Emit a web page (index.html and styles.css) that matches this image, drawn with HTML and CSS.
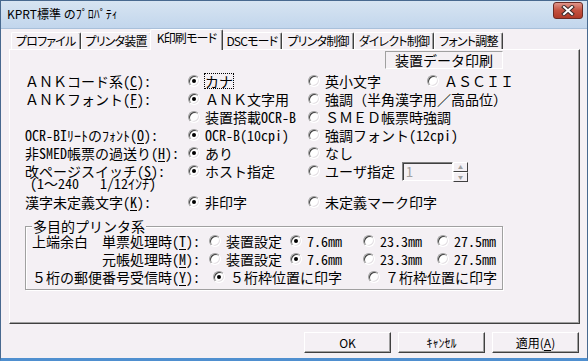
FILE: index.html
```html
<!DOCTYPE html>
<html lang="ja">
<head>
    <meta charset="UTF-8">
    <title>KPRT標準 のﾌﾟﾛﾊﾟﾃｨ</title>
    <link rel="stylesheet" href="styles.css">
</head>
<body>
    <div class="window">
        <div class="titlebar">
            <span class="title">KPRT標準 のﾌﾟﾛﾊﾟﾃｨ</span>
            <span class="close-btn">
                <svg width="14" height="11" viewBox="0 0 14 11">
                    <path d="M3 2 L11 9 M11 2 L3 9" stroke="#3a2a2a" stroke-width="4" stroke-linecap="square"/>
                    <path d="M3 2 L11 9 M11 2 L3 9" stroke="#ffffff" stroke-width="2" stroke-linecap="square"/>
                </svg>
            </span>
        </div>

        <div class="client">
            <div class="tabs">
                <div class="tab">プロファイル</div>
                <div class="tab">プリンタ装置</div>
                <div class="tab active">K印刷モード</div>
                <div class="tab">DSCモード</div>
                <div class="tab">プリンタ制御</div>
                <div class="tab">ダイレクト制御</div>
                <div class="tab">フォント調整</div>
            </div>

            <div class="panel">
                <div class="panel-head">
                    <span class="print-label">装置データ印刷</span>
                </div>

                <div class="form">
                    <div class="row">
                        <span class="label">ＡＮＫコード系(<u>C</u>):</span>
                        <span class="opt col1 checked"><span class="radio"></span><span class="focus">カナ</span></span>
                        <span class="opt col2"><span class="radio"></span>英小文字</span>
                        <span class="opt"><span class="radio"></span>ＡＳＣＩＩ</span>
                    </div>
                    <div class="row">
                        <span class="label">ＡＮＫフォント(<u>F</u>):</span>
                        <span class="opt col1 checked"><span class="radio"></span>ＡＮＫ文字用</span>
                        <span class="opt"><span class="radio"></span>強調（半角漢字用／高品位）</span>
                    </div>
                    <div class="row">
                        <span class="label"></span>
                        <span class="opt col1"><span class="radio"></span>装置搭載OCR-B</span>
                        <span class="opt"><span class="radio"></span>ＳＭＥＤ帳票時強調</span>
                    </div>
                    <div class="row">
                        <span class="label">OCR-BIﾘｰﾄのﾌｫﾝﾄ(<u>O</u>):</span>
                        <span class="opt col1 checked"><span class="radio"></span>OCR-B(10cpi)</span>
                        <span class="opt"><span class="radio"></span>強調フォント(12cpi)</span>
                    </div>
                    <div class="row">
                        <span class="label">非SMED帳票の過送り(<u>H</u>):</span>
                        <span class="opt col1 checked"><span class="radio"></span>あり</span>
                        <span class="opt"><span class="radio"></span>なし</span>
                    </div>
                    <div class="row">
                        <span class="label">改ページスイッチ(<u>S</u>):</span>
                        <span class="opt col1 checked"><span class="radio"></span>ホスト指定</span>
                        <span class="opt"><span class="radio"></span>ユーザ指定</span>
                        <span class="spin">
                            <span class="spin-input">1</span>
                            <span class="spin-btns">
                                <span class="spin-btn">▲</span>
                                <span class="spin-btn">▼</span>
                            </span>
                        </span>
                    </div>
                    <div class="note">(1～240   1/12ｲﾝﾁ)</div>
                    <div class="row">
                        <span class="label">漢字未定義文字(<u>K</u>):</span>
                        <span class="opt col1 checked"><span class="radio"></span>非印字</span>
                        <span class="opt"><span class="radio"></span>未定義マーク印字</span>
                    </div>

                    <fieldset class="group">
                        <legend>多目的プリンタ系</legend>
                        <div class="row">
                            <span class="glabel"><span class="ghead">上端余白</span>単票処理時(<u>T</u>):</span>
                            <span class="opt g1"><span class="radio"></span>装置設定</span>
                            <span class="opt g2 checked"><span class="radio"></span>7.6mm</span>
                            <span class="opt g3"><span class="radio"></span>23.3mm</span>
                            <span class="opt"><span class="radio"></span>27.5mm</span>
                        </div>
                        <div class="row">
                            <span class="glabel"><span class="ghead"></span>元帳処理時(<u>M</u>):</span>
                            <span class="opt g1"><span class="radio"></span>装置設定</span>
                            <span class="opt g2 checked"><span class="radio"></span>7.6mm</span>
                            <span class="opt g3"><span class="radio"></span>23.3mm</span>
                            <span class="opt"><span class="radio"></span>27.5mm</span>
                        </div>
                        <div class="row">
                            <span class="glabel wide">５桁の郵便番号受信時(<u>Y</u>):</span>
                            <span class="opt g5 checked"><span class="radio"></span>５桁枠位置に印字</span>
                            <span class="opt"><span class="radio"></span>７桁枠位置に印字</span>
                        </div>
                    </fieldset>
                </div>
            </div>

            <div class="buttons">
                <span class="btn">OK</span>
                <span class="btn">ｷｬﾝｾﾙ</span>
                <span class="btn">適用(<u>A</u>)</span>
            </div>
        </div>
    </div>
</body>
</html>
```

FILE: styles.css
```css
body {
    margin: 0;
    font-family: "Noto Sans Mono CJK JP", "Noto Sans CJK JP", sans-serif;
    font-size: 14px;
    color: #000;
    background: #ffffff;
}
u {
    text-decoration: underline;
    text-underline-offset: 2px;
}
.window {
    width: 588px;
    height: 361px;
    box-sizing: border-box;
    display: flex;
    flex-direction: column;
    background: #f4f0f4;
    border: 1px solid #48698f;
    border-bottom-width: 3px;
    border-bottom-color: #4f8fcf;
}
.titlebar {
    height: 27px;
    flex: none;
    display: flex;
    align-items: center;
    justify-content: space-between;
    padding: 0 4px 0 6px;
    background: linear-gradient(#d7e4f2, #c2d6ec);
    border-bottom: 1px solid #a9c0da;
    font-family: "Noto Sans CJK JP", sans-serif;
    font-size: 12px;
}
.title {
    color: #000;
    margin-top: -2px;
}
.close-btn {
    width: 28px;
    height: 15px;
    margin-top: -9px;
    display: flex;
    align-items: center;
    justify-content: center;
    border: 1px solid #6b2b24;
    border-radius: 3px;
    background: linear-gradient(#e0958a, #c4513f 50%, #b03a28);
}
.client {
    flex: 1;
    display: flex;
    flex-direction: column;
    padding: 1px 7px 0 8px;
}
.tabs {
    display: flex;
    align-items: flex-end;
    height: 19px;
    padding-left: 2px;
    font-family: "Noto Sans CJK JP", sans-serif;
    font-size: 12px;
    letter-spacing: -0.8px;
    font-feature-settings: "palt";
}
.tab {
    height: 16px;
    line-height: 16px;
    padding: 0 4px;
    border: 1px solid;
    border-color: #ffffff #404040 transparent #ffffff;
    border-bottom: none;
    border-radius: 2px 2px 0 0;
    box-shadow: inset -1px 0 #a0a0a0;
    white-space: nowrap;
}
.tab.active {
    height: 19px;
    margin: 0 -2px -1px;
    padding: 0 6px 1px;
    background: #f4f0f4;
    position: relative;
    z-index: 1;
}
.panel {
    height: 275px;
    box-sizing: border-box;
    border: 1px solid;
    border-color: #ffffff #404040 #404040 #ffffff;
    box-shadow: inset -1px -1px #a0a0a0;
}
.panel-head {
    height: 18px;
    padding-left: 375px;
}
.print-label {
    display: inline-block;
    width: 116px;
    height: 16px;
    line-height: 16px;
    text-align: center;
    border: 1px solid;
    border-color: #a0a0a0 #ffffff #ffffff #a0a0a0;
}
.form {
    padding: 4px 0 0 15px;
}
.row {
    display: flex;
    align-items: center;
    height: 18px;
    line-height: 14px;
    white-space: nowrap;
}
.label {
    width: 163px;
    flex: none;
}
.opt {
    display: flex;
    align-items: center;
    flex: none;
}
.col1 {
    width: 120px;
}
.col2 {
    width: 119px;
}
.radio {
    width: 12px;
    height: 12px;
    box-sizing: border-box;
    margin-right: 5px;
    border-radius: 50%;
    border: 1px solid;
    border-color: #a0a0a0 #ffffff #ffffff #a0a0a0;
    background: #ffffff;
    box-shadow: inset 1px 1px #404040, inset -1px -1px #e4e0e4;
    position: relative;
    flex: none;
}
.checked > .radio::after {
    content: "";
    position: absolute;
    left: 3px;
    top: 3px;
    width: 4px;
    height: 4px;
    border-radius: 50%;
    background: #000;
}
.focus {
    outline: 1px dotted #000;
    outline-offset: 0;
}
.spin {
    display: flex;
    margin-left: 7px;
    height: 19px;
}
.spin-input {
    width: 51px;
    box-sizing: border-box;
    border: 1px solid;
    border-color: #808080 #ffffff #ffffff #808080;
    box-shadow: inset 1px 1px #404040;
    color: #a0a0a0;
    line-height: 17px;
    padding-left: 3px;
}
.spin-btns {
    width: 15px;
    display: flex;
    flex-direction: column;
}
.spin-btn {
    flex: 1;
    font-size: 5px;
    line-height: 8px;
    color: #a0a0a0;
    text-align: center;
    border: 1px solid;
    border-color: #ffffff #404040 #404040 #ffffff;
}
.note {
    height: 13px;
    line-height: 13px;
    margin: -3px 0 3px;
    padding-left: 5px;
    white-space: pre;
}
.group {
    width: 478px;
    box-sizing: border-box;
    margin: 9px 0 0 0;
    padding: 0 0 3px 6px;
    border: 1px solid #a0a0a0;
    box-shadow: inset 1px 1px #ffffff, 1px 1px #ffffff;
}
.group legend {
    padding: 0 1px;
    line-height: 12px;
    background: #f4f0f4;
}
.glabel {
    width: 177px;
    flex: none;
    display: flex;
}
.glabel.wide {
    width: 181px;
}
.ghead {
    width: 70px;
    flex: none;
}
.g1 {
    width: 81px;
}
.g2 {
    width: 73px;
}
.g3 {
    width: 74px;
}
.g5 {
    width: 155px;
}
.buttons {
    display: flex;
    justify-content: flex-end;
    gap: 7px;
    padding: 8px 1px 0 0;
}
.btn {
    width: 87px;
    height: 21px;
    box-sizing: border-box;
    display: flex;
    align-items: center;
    justify-content: center;
    font-family: "Noto Sans CJK JP", sans-serif;
    font-size: 12px;
    border: 1px solid;
    border-color: #ffffff #404040 #404040 #ffffff;
    box-shadow: inset -1px -1px #a0a0a0;
}
```
